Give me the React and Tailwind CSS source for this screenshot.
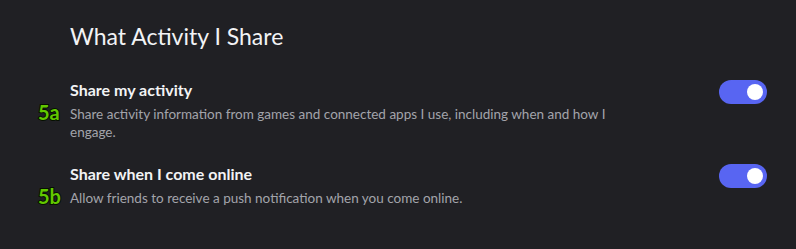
const settings = [
  {
    id: "activity",
    marker: "5a",
    title: "Share my activity",
    description:
      "Share activity information from games and connected apps I use, including when and how I engage.",
  },
  {
    id: "online",
    marker: "5b",
    title: "Share when I come online",
    description: "Allow friends to receive a push notification when you come online.",
  },
];

const Toggle = ({ on }) => (
  <div
    className={`flex h-6 w-12 shrink-0 items-center rounded-full px-1 ${
      on ? "justify-end bg-[#5865f2]" : "justify-start bg-[#4e5058]"
    }`}
  >
    <div className="h-4 w-4 rounded-full bg-white" />
  </div>
);

export default function App() {
  return (
    <div
      className="h-[249px] w-[796px] bg-[#202024] pl-[70px] pr-[29px] pt-[22px]"
      style={{ fontFamily: 'Lato, "Noto Sans", sans-serif' }}
    >
      <h2 className="text-[23px] leading-[28px] text-[#f2f3f5]">What Activity I Share</h2>

      <div className="mt-[30px] flex flex-col gap-[23px]">
        {settings.map((item) => (
          <div key={item.id} className="relative flex items-start justify-between">
            <span
              className="absolute left-[-32px] top-[22px] text-[20px] font-bold leading-none text-[#62c800]"
              style={{ WebkitTextStroke: "2px #061000", paintOrder: "stroke fill" }}
            >
              {item.marker}
            </span>
            <div className="flex max-w-[560px] flex-col gap-[5px]">
              <div className="text-[16px] font-bold leading-[20px] text-[#f2f3f5]">
                {item.title}
              </div>
              <div className="text-[13.5px] leading-[18px] text-[#a3a4ab]">{item.description}</div>
            </div>
            <Toggle on />
          </div>
        ))}
      </div>
    </div>
  );
}
